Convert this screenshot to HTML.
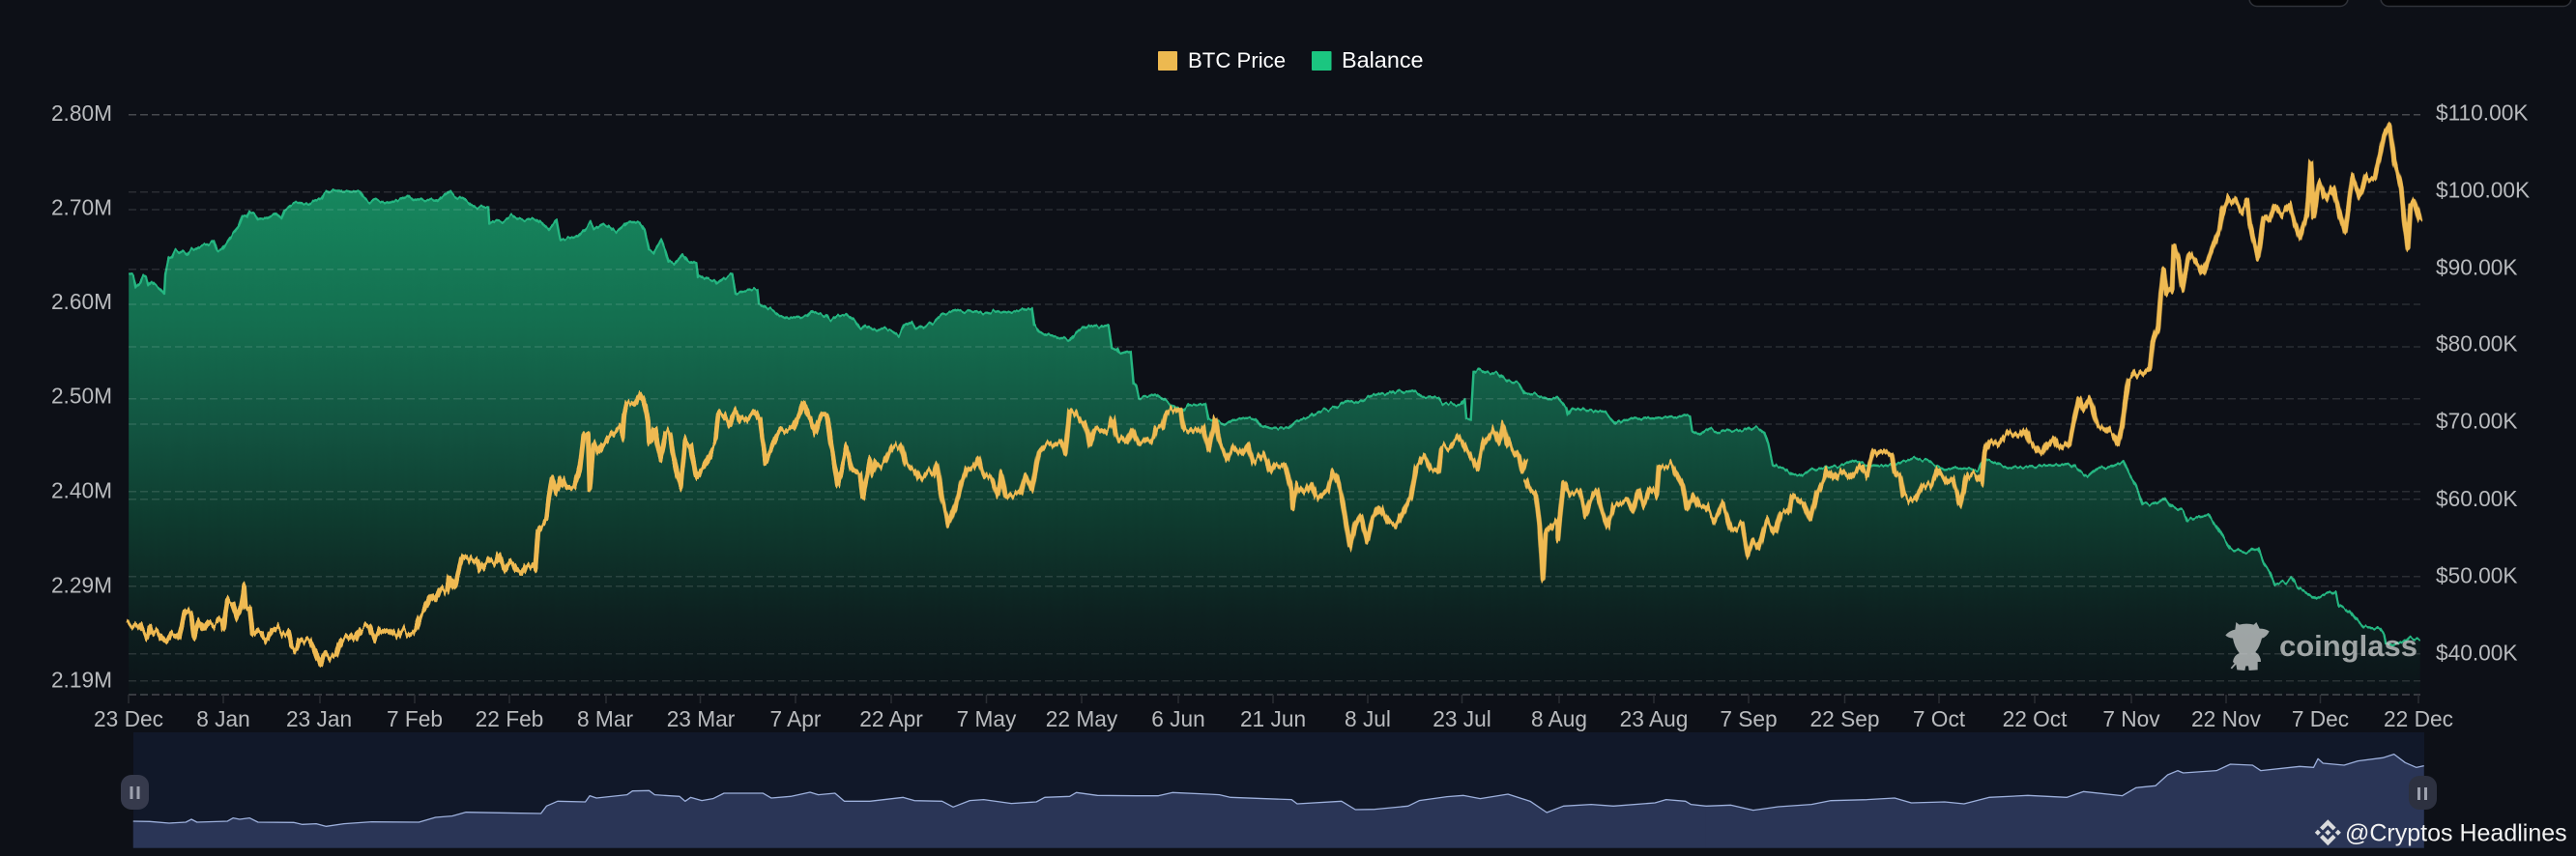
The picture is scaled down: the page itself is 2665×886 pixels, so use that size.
<!DOCTYPE html>
<html lang="en"><head><meta charset="utf-8"><title>BTC Price vs Balance</title>
<style>
html,body{margin:0;padding:0;background:#0d1017}
svg{display:block}
text{font-family:"Liberation Sans",sans-serif}
.g{fill:none;stroke:#fff;stroke-width:1.5;stroke-dasharray:8 4}
.bal{fill:none;stroke:#25b681;stroke-width:2.4;stroke-linejoin:round;vector-effect:non-scaling-stroke}
.pr{fill:none;stroke:#efba52;stroke-width:5;stroke-linejoin:round;stroke-linecap:round;vector-effect:non-scaling-stroke}
.nl{fill:none;stroke:#9db0dc;stroke-width:1.3;stroke-linejoin:round;vector-effect:non-scaling-stroke}
.ax{fill:#b9bbbe;font-size:22.7px}
.xl{fill:#b9bbbe;font-size:22.7px;text-anchor:middle}
</style></head>
<body>
<svg xmlns="http://www.w3.org/2000/svg" width="2665" height="886" viewBox="0 0 2665 886">
<defs>
<linearGradient id="ag" gradientUnits="userSpaceOnUse" x1="0" y1="195" x2="0" y2="719">
<stop offset="0" stop-color="#16875e"/>
<stop offset=".27" stop-color="#146e4f"/>
<stop offset=".48" stop-color="#125340"/>
<stop offset=".66" stop-color="#0e3a2e"/>
<stop offset=".84" stop-color="#0d2120"/>
<stop offset="1" stop-color="#0c1318"/>
</linearGradient>
<filter id="jg" filterUnits="userSpaceOnUse" x="0" y="0" width="2665" height="886" color-interpolation-filters="sRGB">
<feTurbulence type="fractalNoise" baseFrequency="0.3 0.012" numOctaves="2" seed="4" result="n"/>
<feColorMatrix in="n" type="matrix" values="0 0 0 0 .5  0 1 0 0 0  0 0 0 0 .5  0 0 0 0 1" result="m"/>
<feDisplacementMap in="SourceGraphic" in2="m" scale="14" xChannelSelector="R" yChannelSelector="G"/>
</filter>
<filter id="js" filterUnits="userSpaceOnUse" x="0" y="0" width="2665" height="886" color-interpolation-filters="sRGB">
<feTurbulence type="fractalNoise" baseFrequency="0.22 0.012" numOctaves="2" seed="9" result="n"/>
<feColorMatrix in="n" type="matrix" values="0 0 0 0 .5  0 1 0 0 0  0 0 0 0 .5  0 0 0 0 1" result="m"/>
<feDisplacementMap in="SourceGraphic" in2="m" scale="7" xChannelSelector="R" yChannelSelector="G"/>
</filter>
<clipPath id="ac">
<path transform="scale(.57398 .33333)" d="M232 850 240 852 245 890 252 880 258 857 263 860 267 885 273 875 280 885 290 900 296 912 298 850 304 800 310 797 316 775 325 785 332 780 338 790 345 775 355 770 365 762 375 758 385 747 392 780 400 775 410 750 420 725 430 705 437 670 445 675 450 657 458 660 465 678 475 680 485 672 495 662 507 678 513 650 525 635 540 630 555 632 568 622 580 615 585 598 600 590 615 592 630 598 648 595 655 615 665 628 675 618 685 622 700 630 715 622 735 608 745 620 755 615 770 622 785 625 795 610 810 595 820 610 835 620 850 638 860 645 880 640 882 695 895 685 905 688 922 672 935 682 950 680 965 680 980 700 988 712 1003 682 1006 710 1010 745 1020 742 1042 733 1053 712 1064 692 1070 712 1085 697 1095 702 1110 720 1125 700 1130 690 1152 690 1162 715 1170 775 1178 785 1192 745 1198 770 1205 810 1215 820 1230 790 1240 810 1255 812 1258 855 1270 865 1288 870 1292 880 1305 862 1320 852 1326 912 1340 902 1365 898 1368 942 1385 960 1395 965 1405 980 1420 988 1440 985 1455 982 1462 968 1480 975 1490 982 1495 995 1510 980 1525 975 1540 995 1550 1022 1560 1010 1568 1018 1568 2157 232 2157Z"/>
<path transform="translate(900 0) scale(.57398 .33333)" d="M0 1018 10 1025 25 1020 40 1028 52 1040 62 1010 75 1000 82 1018 100 1012 115 1000 130 975 155 965 175 968 190 965 205 975 222 965 240 970 265 965 292 958 296 1010 305 1030 320 1040 340 1048 360 1055 372 1030 395 1010 410 1015 430 1010 436 1078 445 1082 450 1100 470 1090 475 1190 480 1200 485 1238 500 1230 515 1225 530 1240 545 1260 565 1275 575 1258 605 1255 610 1300 625 1310 640 1320 655 1305 675 1300 695 1300 705 1322 720 1330 755 1328 765 1310 780 1305 800 1285 815 1275 835 1268 860 1245 880 1250 905 1228 925 1222 945 1218 965 1215 980 1212 995 1232 1025 1235 1032 1252 1065 1258 1072 1240 1075 1300 1083 1302 1088 1155 1098 1145 1110 1155 1130 1155 1150 1185 1170 1190 1180 1220 1200 1225 1225 1240 1240 1235 1255 1265 1258 1290 1265 1270 1290 1272 1325 1280 1345 1318 1360 1302 1400 1295 1420 1300 1440 1295 1478 1290 1482 1335 1495 1348 1507 1333 1507 2157 0 2157Z"/>
<path transform="translate(1765 436) scale(.57398 .33333)" d="M0 25 20 35 40 30 55 32 75 20 95 22 105 35 112 70 120 135 130 145 140 145 155 165 170 168 190 150 215 145 240 138 265 125 290 135 310 138 340 135 355 125 375 113 395 120 415 135 430 150 450 145 475 145 490 155 498 125 515 125 530 137 550 143 590 140 620 137 655 132 670 150 688 172 705 145 730 145 752 128 765 170 775 200 787 260 805 258 815 250 827 238 840 265 850 272 860 280 868 310 890 295 905 290 920 325 930 355 945 395 955 400 975 408 988 395 995 395 1005 440 1015 465 1025 505 1045 498 1055 485 1065 515 1085 535 1100 550 1120 535 1135 530 1140 570 1160 590 1170 615 1185 640 1215 645 1222 660 1225 690 1240 695 1262 680 1268 670 1287 680 1287 849 0 849Z"/>
</clipPath>
</defs>

<rect width="2665" height="886" fill="#0d1017"/>

<!-- top right buttons -->
<rect x="2327" y="-20" width="102" height="26.5" rx="8" fill="#050609" stroke="#2f3239" stroke-width="1.5"/>
<rect x="2463" y="-20" width="197" height="26.5" rx="8" fill="#050609" stroke="#2f3239" stroke-width="1.5"/>

<!-- legend -->
<rect x="1198" y="53" width="20" height="20" rx="1" fill="#edb950"/>
<text x="1229" y="70" fill="#fff" font-size="22.2">BTC Price</text>
<rect x="1357" y="53" width="20.5" height="20" rx="1" fill="#1bc680"/>
<text x="1388" y="70" fill="#fff" font-size="23.4">Balance</text>

<!-- area + balance line, jittered together -->
<g filter="url(#js)">
<rect x="133" y="190" width="2372" height="530" fill="url(#ag)" clip-path="url(#ac)"/>
<path class="bal" transform="scale(.57398 .33333)" d="M232 850 240 852 245 890 252 880 258 857 263 860 267 885 273 875 280 885 290 900 296 912 298 850 304 800 310 797 316 775 325 785 332 780 338 790 345 775 355 770 365 762 375 758 385 747 392 780 400 775 410 750 420 725 430 705 437 670 445 675 450 657 458 660 465 678 475 680 485 672 495 662 507 678 513 650 525 635 540 630 555 632 568 622 580 615 585 598 600 590 615 592 630 598 648 595 655 615 665 628 675 618 685 622 700 630 715 622 735 608 745 620 755 615 770 622 785 625 795 610 810 595 820 610 835 620 850 638 860 645 880 640 882 695 895 685 905 688 922 672 935 682 950 680 965 680 980 700 988 712 1003 682 1006 710 1010 745 1020 742 1042 733 1053 712 1064 692 1070 712 1085 697 1095 702 1110 720 1125 700 1130 690 1152 690 1162 715 1170 775 1178 785 1192 745 1198 770 1205 810 1215 820 1230 790 1240 810 1255 812 1258 855 1270 865 1288 870 1292 880 1305 862 1320 852 1326 912 1340 902 1365 898 1368 942 1385 960 1395 965 1405 980 1420 988 1440 985 1455 982 1462 968 1480 975 1490 982 1495 995 1510 980 1525 975 1540 995 1550 1022 1560 1010 1568 1018"/>
<path class="bal" transform="translate(900 0) scale(.57398 .33333)" d="M0 1018 10 1025 25 1020 40 1028 52 1040 62 1010 75 1000 82 1018 100 1012 115 1000 130 975 155 965 175 968 190 965 205 975 222 965 240 970 265 965 292 958 296 1010 305 1030 320 1040 340 1048 360 1055 372 1030 395 1010 410 1015 430 1010 436 1078 445 1082 450 1100 470 1090 475 1190 480 1200 485 1238 500 1230 515 1225 530 1240 545 1260 565 1275 575 1258 605 1255 610 1300 625 1310 640 1320 655 1305 675 1300 695 1300 705 1322 720 1330 755 1328 765 1310 780 1305 800 1285 815 1275 835 1268 860 1245 880 1250 905 1228 925 1222 945 1218 965 1215 980 1212 995 1232 1025 1235 1032 1252 1065 1258 1072 1240 1075 1300 1083 1302 1088 1155 1098 1145 1110 1155 1130 1155 1150 1185 1170 1190 1180 1220 1200 1225 1225 1240 1240 1235 1255 1265 1258 1290 1265 1270 1290 1272 1325 1280 1345 1318 1360 1302 1400 1295 1420 1300 1440 1295 1478 1290 1482 1335 1495 1348 1507 1333"/>
<path class="bal" transform="translate(1765 436) scale(.57398 .33333)" d="M0 25 20 35 40 30 55 32 75 20 95 22 105 35 112 70 120 135 130 145 140 145 155 165 170 168 190 150 215 145 240 138 265 125 290 135 310 138 340 135 355 125 375 113 395 120 415 135 430 150 450 145 475 145 490 155 498 125 515 125 530 137 550 143 590 140 620 137 655 132 670 150 688 172 705 145 730 145 752 128 765 170 775 200 787 260 805 258 815 250 827 238 840 265 850 272 860 280 868 310 890 295 905 290 920 325 930 355 945 395 955 400 975 408 988 395 995 395 1005 440 1015 465 1025 505 1045 498 1055 485 1065 515 1085 535 1100 550 1120 535 1135 530 1140 570 1160 590 1170 615 1185 640 1215 645 1222 660 1225 690 1240 695 1262 680 1268 670 1287 680"/>
</g>

<!-- grid -->
<g class="g">
<path d="M133 118.7H2504" stroke-opacity=".24"/>
<path d="M133 198.7H2504" stroke-opacity=".12"/>
<path d="M133 217H2504" stroke-opacity=".12"/>
<path d="M133 278.7H2504" stroke-opacity=".12"/>
<path d="M133 315H2504" stroke-opacity=".12"/>
<path d="M133 359H2504" stroke-opacity=".12"/>
<path d="M133 412.7H2504" stroke-opacity=".12"/>
<path d="M133 439H2504" stroke-opacity=".12"/>
<path d="M133 508.7H2504" stroke-opacity=".12"/>
<path d="M133 516.7H2504" stroke-opacity=".12"/>
<path d="M133 596.7H2504" stroke-opacity=".12"/>
<path d="M133 606.7H2504" stroke-opacity=".12"/>
<path d="M133 676.7H2504" stroke-opacity=".12"/>
<path d="M133 704.7H2504" stroke-opacity=".12"/>
<path d="M133 719H2504" stroke-opacity=".24"/>
</g>
<path stroke="#2b2e34" stroke-width="1.5" d="M133 719v9M231 719v9M331 719v9M429 719v9M527 719v9M627 719v9M724.5 719v9M823 719v9M922 719v9M1020.5 719v9M1119 719v9M1219 719v9M1317 719v9M1415 719v9M1512.5 719v9M1613 719v9M1711 719v9M1809 719v9M1908.5 719v9M2006 719v9M2105 719v9M2205 719v9M2303 719v9M2400.5 719v9M2502 719v9"/>

<!-- coinglass watermark -->
<g opacity=".75">
<path transform="translate(2265 620) scale(.33333)" fill="#cfd2d2" d="M145 72 155 80Q178 74 200 80L208 72 218 92Q235 92 248 100 240 118 225 122 218 150 205 165 222 175 222 195L212 195 212 220 185 222 183 208 175 208 172 222 148 220 145 203 132 217 128 214 140 200 135 195Q138 175 155 168 140 150 135 122 118 120 112 112 125 98 142 95Z"/>
<text x="2358" y="679" fill="#cfd2d2" font-size="31" font-weight="700">coinglass</text>
</g>

<!-- price line -->
<g filter="url(#jg)">
<path class="pr" transform="translate(0 436) scale(.57398 .33333)" d="M232 630 240 635 247 640 252 632 260 655 265 670 270 640 275 660 282 650 290 670 300 685 310 660 322 670 328 630 332 585 340 590 345 605 350 672 358 620 368 645 375 625 385 635 400 615 403 645 410 555 420 565 427 610 435 575 440 515 443 585 450 580 455 660 470 655 480 680 490 650 500 642 510 660 520 658 525 695 533 715 540 680 558 680 570 720 578 755 585 720 595 735 605 728 615 680 630 665 640 680 650 645 665 635 675 678 685 650 700 650 715 668 725 645 735 660 748 655 755 615 770 570 775 542 785 555 795 520 805 530 810 480 820 520 825 480 832 425 842 420 850 435 860 430 865 460 882 430 892 440 898 415 910 460 920 435 930 460 940 470 950 445 965 460 970 330 978 320 985 305 990 230 995 175 1003 220 1012 175 1020 205 1035 205 1045 150 1052 40 1060 35 1063 210 1070 65 1078 95 1085 70 1100 40 1118 20 1122 45 1125 -28 1130 -58 1145 -53 1155 -86 1163 -48 1168 2 1170 70 1180 20 1190 120 1200 35 1207 30 1215 120 1227 205 1235 60 1245 80 1255 175 1265 150 1275 120 1290 60 1295 -23 1305 -18 1315 12 1325 -35 1335 -5 1345 -10 1360 -30 1370 -5 1380 125 1390 90 1405 32 1430 22 1448 -58 1460 -10 1470 35 1480 -20 1490 -22 1497 60 1510 200 1520 130 1525 85 1535 150 1550 165 1555 240 1568 120"/>
<path class="pr" transform="translate(900 436) scale(.57398 .33333)" d="M0 120 5 165 10 130 20 135 30 115 40 80 55 75 65 140 80 150 90 180 105 155 115 165 120 130 130 240 142 320 155 260 165 190 175 150 190 140 195 120 205 165 220 180 230 230 237 165 245 235 260 225 272 220 280 170 292 210 305 95 320 75 345 70 352 100 360 -33 368 -28 378 -5 388 10 397 75 405 30 430 25 438 -10 445 45 462 65 472 25 485 70 510 55 515 25 528 15 533 -25 545 -35 560 -35 565 25 585 30 600 20 610 90 620 20 622 -10 630 65 645 115 655 85 670 100 680 75 690 130 710 100 722 155 730 135 748 140 760 210 762 262 770 200 785 220 795 195 805 240 825 215 835 155 845 190 855 280 865 392 875 320 885 290 897 370 905 310 920 265 935 310 948 320 965 265 975 235 985 140 1000 105 1010 145 1025 155 1030 80 1045 75 1060 50 1075 90 1095 145 1105 70 1120 40 1125 25 1135 65 1142 10 1148 60 1160 95 1170 110 1175 155 1182 122M1182 185 1190 215 1200 225 1207 320 1213 490 1218 350 1225 340 1240 310 1240 370 1250 190 1260 225 1280 220 1290 290 1300 240 1310 215 1320 280 1330 325 1340 265 1365 245 1375 280 1385 215 1395 260 1405 210 1418 230 1422 140 1445 140 1465 200 1472 275 1485 230 1495 265 1507 265"/>
<path class="pr" transform="translate(1765 436) scale(.57398 .33333)" d="M0 265 15 305 30 255 45 335 65 320 75 415 85 375 95 395 110 310 125 345 135 285 150 280 155 230 175 255 188 305 200 225 210 190 218 155 230 180 245 155 260 175 280 140 290 170 300 105 310 95 335 105 340 160 350 170 355 225 365 240 378 240 390 200 405 200 418 150 435 190 445 180 458 260 470 170 485 165 497 190 502 95 512 60 525 70 545 35 565 45 575 25 585 70 605 105 615 70 625 50 635 85 655 70 662 10 672 -73 680 -38 692 -68 705 12 720 20 735 45 742 70 750 15 755 -58 762 -128 770 -140 775 -150 785 -145 800 -160 805 -250 815 -290 820 -400 825 -470 830 -395 840 -405 843 -545 852 -500 858 -410 870 -520 885 -490 895 -455 905 -500 915 -550 925 -590 930 -650 942 -700 955 -680 965 -650 975 -680 980 -610 995 -505 1005 -640 1015 -625 1025 -670 1037 -640 1052 -670 1060 -620 1070 -570 1083 -640 1090 -805 1095 -630 1105 -740 1115 -690 1130 -730 1142 -640 1152 -585 1165 -760 1180 -695 1190 -760 1205 -750 1215 -830 1222 -890 1232 -918 1240 -810 1253 -730 1258 -630 1265 -538 1270 -680 1275 -690 1287 -625"/>
</g>

<!-- left axis -->
<g class="ax" text-anchor="end">
<text x="116" y="125">2.80M</text>
<text x="116" y="222.5">2.70M</text>
<text x="116" y="320">2.60M</text>
<text x="116" y="417.5">2.50M</text>
<text x="116" y="515.7">2.40M</text>
<text x="116" y="613.3">2.29M</text>
<text x="116" y="711.7">2.19M</text>
</g>
<!-- right axis -->
<g class="ax">
<text x="2520" y="124.7">$110.00K</text>
<text x="2520" y="204.7">$100.00K</text>
<text x="2520" y="284.7">$90.00K</text>
<text x="2520" y="363.7">$80.00K</text>
<text x="2520" y="443.7">$70.00K</text>
<text x="2520" y="524">$60.00K</text>
<text x="2520" y="603.3">$50.00K</text>
<text x="2520" y="683.3">$40.00K</text>
</g>
<!-- x axis -->
<g class="xl">
<text x="133" y="752">23 Dec</text><text x="231" y="752">8 Jan</text><text x="330" y="752">23 Jan</text><text x="429" y="752">7 Feb</text><text x="527" y="752">22 Feb</text><text x="626" y="752">8 Mar</text><text x="725" y="752">23 Mar</text><text x="823" y="752">7 Apr</text><text x="922" y="752">22 Apr</text><text x="1020.5" y="752">7 May</text><text x="1119" y="752">22 May</text><text x="1219" y="752">6 Jun</text><text x="1317" y="752">21 Jun</text><text x="1415" y="752">8 Jul</text><text x="1512.5" y="752">23 Jul</text><text x="1613" y="752">8 Aug</text><text x="1711" y="752">23 Aug</text><text x="1809" y="752">7 Sep</text><text x="1908.5" y="752">22 Sep</text><text x="2006" y="752">7 Oct</text><text x="2105" y="752">22 Oct</text><text x="2205" y="752">7 Nov</text><text x="2303" y="752">22 Nov</text><text x="2400.5" y="752">7 Dec</text><text x="2502" y="752">22 Dec</text>
</g>

<!-- navigator -->
<rect x="138" y="758" width="2370" height="120" fill="#111829"/>
<g fill="#2a3556">
<path transform="translate(0 436) scale(.57398 .33333)" d="M240 1242 270 1243 305 1248 335 1245 345 1236 355 1245 410 1242 420 1232 432 1236 450 1232 465 1245 530 1246 545 1252 570 1250 588 1258 620 1250 670 1244 755 1245 785 1230 815 1226 840 1214 900 1216 975 1218 985 1195 1005 1180 1055 1182 1063 1163 1075 1170 1130 1160 1140 1148 1170 1147 1180 1160 1225 1165 1235 1180 1245 1168 1265 1178 1285 1172 1305 1155 1375 1155 1390 1170 1425 1165 1460 1152 1475 1160 1505 1155 1522 1180 1568 1180 1568 1325 240 1325Z"/>
<path transform="translate(900 436) scale(.57398 .33333)" d="M0 1180 60 1168 80 1178 130 1180 150 1198 180 1178 205 1175 255 1187 300 1182 315 1168 360 1165 372 1153 410 1162 480 1163 520 1163 545 1153 610 1158 630 1160 650 1168 760 1175 770 1188 850 1180 875 1206 910 1205 970 1195 990 1178 1040 1166 1070 1162 1100 1172 1150 1158 1190 1180 1220 1215 1250 1195 1300 1190 1340 1195 1415 1185 1435 1175 1470 1180 1480 1190 1507 1195 1507 1325 0 1325Z"/>
<path transform="translate(1765 436) scale(.57398 .33333)" d="M0 1195 45 1192 85 1208 130 1197 190 1190 225 1178 290 1175 340 1170 370 1185 430 1182 465 1188 510 1168 580 1162 650 1168 680 1150 750 1163 775 1138 810 1132 832 1098 850 1085 860 1092 920 1085 945 1065 985 1068 1000 1085 1070 1072 1095 1075 1103 1048 1112 1062 1150 1068 1175 1055 1220 1045 1240 1034 1260 1060 1280 1075 1294 1070 1294 1325 0 1325Z"/>
</g>
<path class="nl" transform="translate(0 436) scale(.57398 .33333)" d="M240 1242 270 1243 305 1248 335 1245 345 1236 355 1245 410 1242 420 1232 432 1236 450 1232 465 1245 530 1246 545 1252 570 1250 588 1258 620 1250 670 1244 755 1245 785 1230 815 1226 840 1214 900 1216 975 1218 985 1195 1005 1180 1055 1182 1063 1163 1075 1170 1130 1160 1140 1148 1170 1147 1180 1160 1225 1165 1235 1180 1245 1168 1265 1178 1285 1172 1305 1155 1375 1155 1390 1170 1425 1165 1460 1152 1475 1160 1505 1155 1522 1180 1568 1180"/>
<path class="nl" transform="translate(900 436) scale(.57398 .33333)" d="M0 1180 60 1168 80 1178 130 1180 150 1198 180 1178 205 1175 255 1187 300 1182 315 1168 360 1165 372 1153 410 1162 480 1163 520 1163 545 1153 610 1158 630 1160 650 1168 760 1175 770 1188 850 1180 875 1206 910 1205 970 1195 990 1178 1040 1166 1070 1162 1100 1172 1150 1158 1190 1180 1220 1215 1250 1195 1300 1190 1340 1195 1415 1185 1435 1175 1470 1180 1480 1190 1507 1195"/>
<path class="nl" transform="translate(1765 436) scale(.57398 .33333)" d="M0 1195 45 1192 85 1208 130 1197 190 1190 225 1178 290 1175 340 1170 370 1185 430 1182 465 1188 510 1168 580 1162 650 1168 680 1150 750 1163 775 1138 810 1132 832 1098 850 1085 860 1092 920 1085 945 1065 985 1068 1000 1085 1070 1072 1095 1075 1103 1048 1112 1062 1150 1068 1175 1055 1220 1045 1240 1034 1260 1060 1280 1075 1294 1070"/>

<!-- handles -->
<rect x="125" y="802" width="29" height="36" rx="11" fill="#363a4c"/>
<rect x="134.5" y="814" width="3" height="13" fill="#9da1ae"/>
<rect x="141.5" y="814" width="3" height="13" fill="#9da1ae"/>
<rect x="2492" y="803" width="29" height="35" rx="11" fill="#2d3140"/>
<rect x="2501" y="815" width="3" height="13" fill="#9da1ae"/>
<rect x="2508" y="815" width="3" height="13" fill="#9da1ae"/>

<!-- binance watermark -->
<path transform="translate(2394.8 848.2) scale(.2133)" fill="#d9dadc" d="M38.73 53.2l24.59-24.58 24.6 24.6 14.3-14.31L63.32 0 24.42 38.9zM0 63.31l14.3-14.31 14.31 14.31-14.31 14.3zM38.73 73.41l24.59 24.59 24.6-24.6 14.31 14.29-38.9 38.91-38.91-38.88-.02-.02zM98.3 63.32l14.3-14.31 14.31 14.3-14.31 14.31zM77.83 63.3l-14.51-14.52-14.52 14.53 14.51 14.5 14.51-14.47z"/>
<text x="2426" y="870.7" fill="#f2f2f2" font-size="25">@Cryptos Headlines</text>
</svg>
</body></html>
